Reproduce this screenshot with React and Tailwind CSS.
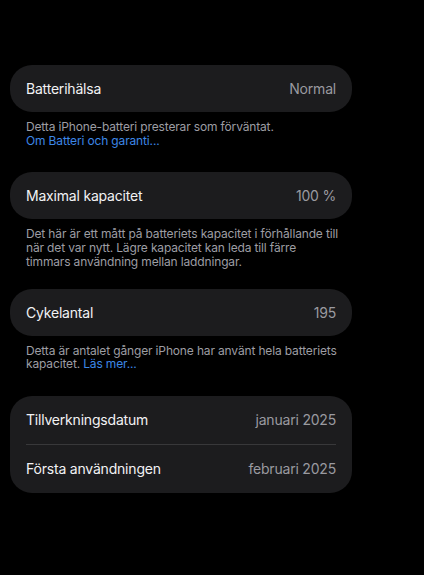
import React from "react"

const Row = ({ label, value, tall = false }) => (
  <div className={tall ? "flex items-center justify-between h-[48px] px-4" : "flex items-center justify-between h-[47px] px-4"}>
    <span className="text-[14px] tracking-[-0.2px] text-[#f2f2f4]">{label}</span>
    <span className="text-[14px] tracking-[-0.2px] text-[#9a9aa0]">{value}</span>
  </div>
)

const Card = ({ children }) => (
  <div className="bg-[#1c1c1e] rounded-[22px]">{children}</div>
)

const Note = ({ children }) => (
  <p className="pl-4 pt-[8px] text-[12px] tracking-[-0.15px] leading-[13.7px] text-[#9d9da3] whitespace-nowrap">
    {children}
  </p>
)

const App = () => {
  return (
    <div
      className="min-h-screen w-[424px] h-[575px] bg-black pt-[65px] pl-[10px] pr-[72px]"
      style={{ fontFamily: "Inter, 'Liberation Sans', sans-serif" }}
    >
      <Card>
        <Row label="Batterihälsa" value="Normal" />
      </Card>
      <Note>
        Detta iPhone-batteri presterar som förväntat.
        <br />
        <span className="text-[#3d87e6]">Om Batteri och garanti...</span>
      </Note>

      <div className="mt-[25px]">
        <Card>
          <Row label="Maximal kapacitet" value="100 %" />
        </Card>
        <Note>
          Det här är ett mått på batteriets kapacitet i förhållande till
          <br />
          när det var nytt. Lägre kapacitet kan leda till färre
          <br />
          timmars användning mellan laddningar.
        </Note>
      </div>

      <div className="mt-[20px]">
        <Card>
          <Row label="Cykelantal" value="195" />
        </Card>
        <Note>
          Detta är antalet gånger iPhone har använt hela batteriets
          <br />
          kapacitet. <span className="text-[#3d87e6]">Läs mer...</span>
        </Note>
      </div>

      <div className="mt-[25px]">
        <Card>
          <Row tall label="Tillverkningsdatum" value="januari 2025" />
          <div className="mx-4 h-px bg-[#38383a]" />
          <Row tall label="Första användningen" value="februari 2025" />
        </Card>
      </div>
    </div>
  )
}

export default App
